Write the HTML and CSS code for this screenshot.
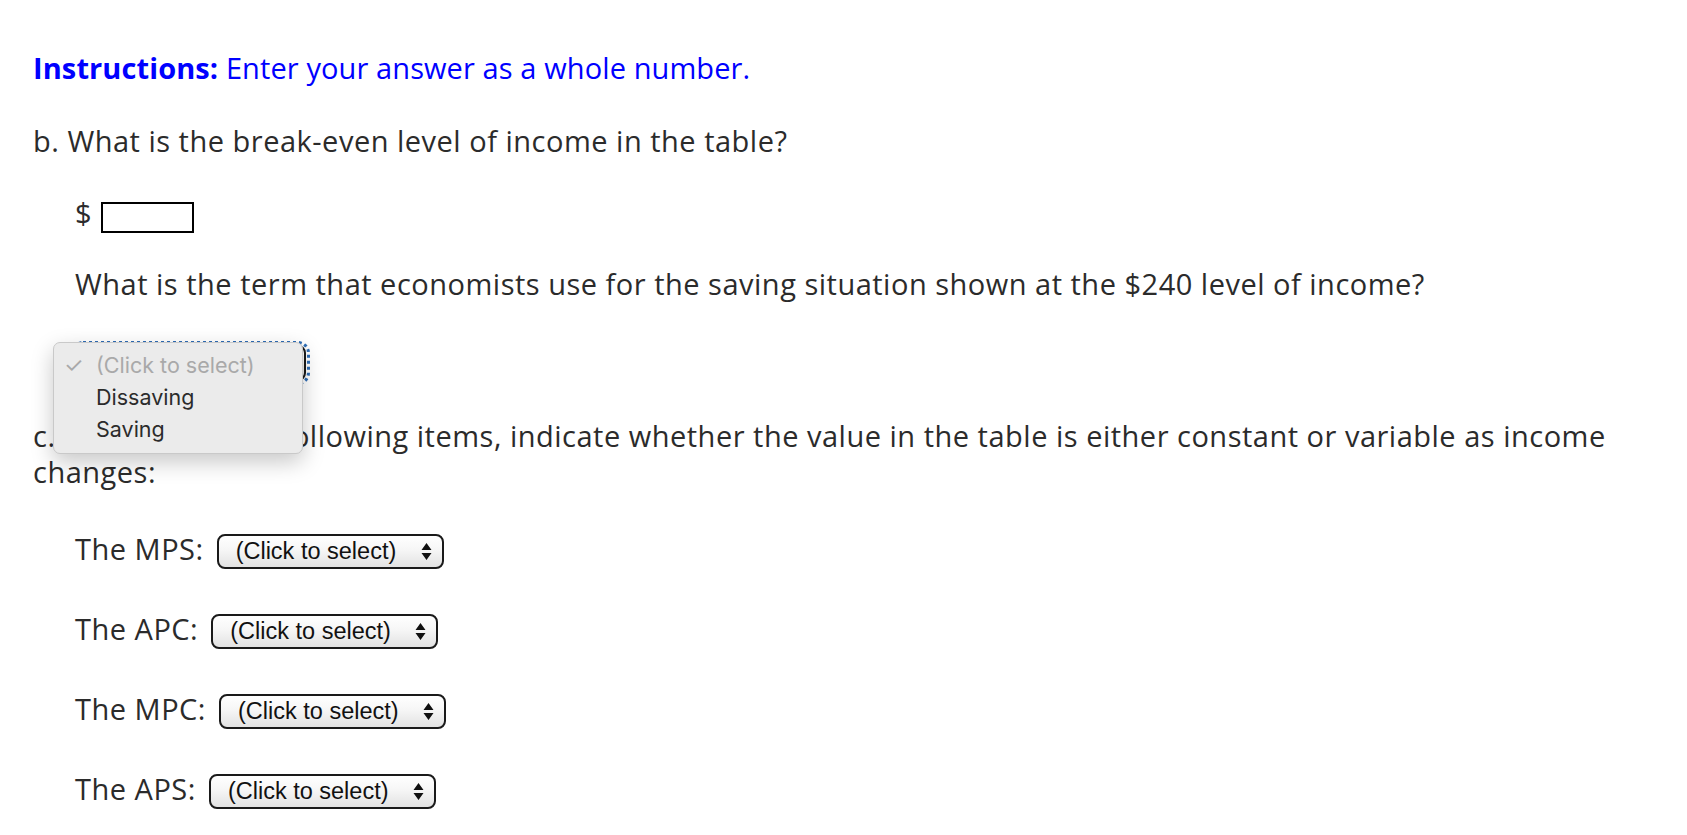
FILE: index.html
```html
<!DOCTYPE html>
<html lang="en">
<head>
    <meta charset="UTF-8">
    <meta name="viewport" content="width=device-width, initial-scale=1.0">
    <title>Saving and Consumption</title>
    <link rel="stylesheet" href="styles.css">
</head>
<body>
    <div class="page">
        <p class="instructions"><strong>Instructions:</strong> Enter your answer as a whole number.</p>
        <p class="question">b. What is the break-even level of income in the table?</p>
        <div class="indent">
            <div class="answer-row">
                <span class="dollar">$</span>
                <span class="answer-box"></span>
            </div>
            <p class="question term">What is the term that economists use for the saving situation shown at the $240 level of income?</p>
            <div class="dropdown-row">
                <div class="select focused">
                    <span>(Click to select)</span>
                    <svg class="arrows" width="11" height="19" viewBox="0 0 11 19"><path d="M5.5 1 L10.5 8 H0.5 Z M5.5 18 L10.5 11 H0.5 Z" fill="#111"/></svg>
                </div>
                <div class="menu">
                    <div class="menu-item disabled"><span class="check">&#10003;</span>(Click to select)</div>
                    <div class="menu-item">Dissaving</div>
                    <div class="menu-item">Saving</div>
                </div>
            </div>
        </div>
        <p class="question part-c">c. For each of the following items, indicate whether the value in the table is either constant or variable as income changes:</p>
        <div class="indent">
            <div class="select-row">
                <span class="label">The MPS:</span>
                <div class="select">
                    <span>(Click to select)</span>
                    <svg class="arrows" width="11" height="19" viewBox="0 0 11 19"><path d="M5.5 1 L10.5 8 H0.5 Z M5.5 18 L10.5 11 H0.5 Z" fill="#111"/></svg>
                </div>
            </div>
            <div class="select-row">
                <span class="label">The APC:</span>
                <div class="select">
                    <span>(Click to select)</span>
                    <svg class="arrows" width="11" height="19" viewBox="0 0 11 19"><path d="M5.5 1 L10.5 8 H0.5 Z M5.5 18 L10.5 11 H0.5 Z" fill="#111"/></svg>
                </div>
            </div>
            <div class="select-row">
                <span class="label">The MPC:</span>
                <div class="select">
                    <span>(Click to select)</span>
                    <svg class="arrows" width="11" height="19" viewBox="0 0 11 19"><path d="M5.5 1 L10.5 8 H0.5 Z M5.5 18 L10.5 11 H0.5 Z" fill="#111"/></svg>
                </div>
            </div>
            <div class="select-row">
                <span class="label">The APS:</span>
                <div class="select">
                    <span>(Click to select)</span>
                    <svg class="arrows" width="11" height="19" viewBox="0 0 11 19"><path d="M5.5 1 L10.5 8 H0.5 Z M5.5 18 L10.5 11 H0.5 Z" fill="#111"/></svg>
                </div>
            </div>
        </div>
    </div>
</body>
</html>
```

FILE: styles.css
```css
body {
    margin: 0;
    background-color: #fff;
    font-family: "Open Sans", Lato, sans-serif;
    font-size: 29px;
    line-height: 36px;
    letter-spacing: 0.5px;
    color: #2b2b2b;
}
.page {
    padding: 50px 33px 0 33px;
}
p {
    margin: 0;
}
.instructions {
    color: #0000ff;
    letter-spacing: 0.1px;
}
.instructions strong {
    font-weight: 700;
}
.question {
    margin-top: 37px;
}
.indent {
    margin-left: 42px;
}
.answer-row {
    display: flex;
    align-items: flex-start;
    margin-top: 36px;
}
.dollar {
    margin-right: 9px;
}
.answer-box {
    width: 89px;
    height: 27px;
    margin-top: 7px;
    border: 2px solid #000;
}
.question.term {
    margin-top: 33px;
}
.dropdown-row {
    position: relative;
    margin-top: 43px;
    display: flex;
}
.select {
    display: flex;
    align-items: center;
    justify-content: space-between;
    width: 227px;
    height: 35px;
    box-sizing: border-box;
    padding: 0 10px 0 17px;
    border: 2px solid #1a1a1a;
    border-radius: 8px;
    background: linear-gradient(#ffffff, #f6f6f6 45%, #e2e2e2);
    font-family: "Liberation Sans", Arial, sans-serif;
    font-size: 23.5px;
    line-height: 1;
    letter-spacing: 0;
    color: #111;
}
.select.focused {
    width: 231px;
    height: 36px;
    outline: 3px dotted #2f6db5;
    outline-offset: 1px;
}
.menu {
    position: absolute;
    left: -22px;
    top: -3px;
    width: 250px;
    height: 112px;
    box-sizing: border-box;
    padding-top: 6px;
    background-color: #ebebeb;
    border: 1px solid #c9c9c9;
    border-radius: 7px;
    box-shadow: 0 8px 22px rgba(0, 0, 0, 0.22);
    font-family: Inter, "Noto Sans", sans-serif;
    font-size: 21.5px;
    line-height: 32px;
    letter-spacing: 0;
    color: #2b2b2b;
}
.menu-item {
    position: relative;
    padding-left: 42px;
}
.menu-item.disabled {
    color: #a9a9a9;
}
.check {
    position: absolute;
    left: 10px;
    font-size: 22px;
    color: #a9a9a9;
}
.question.part-c {
    margin-top: 37px;
}
.select-row {
    display: flex;
    align-items: flex-start;
    margin-top: 42px;
}
.select-row:first-child {
    margin-top: 41px;
}
.select-row .label {
    margin-right: 13px;
}
.select-row .select {
    margin-top: 3px;
}
```
